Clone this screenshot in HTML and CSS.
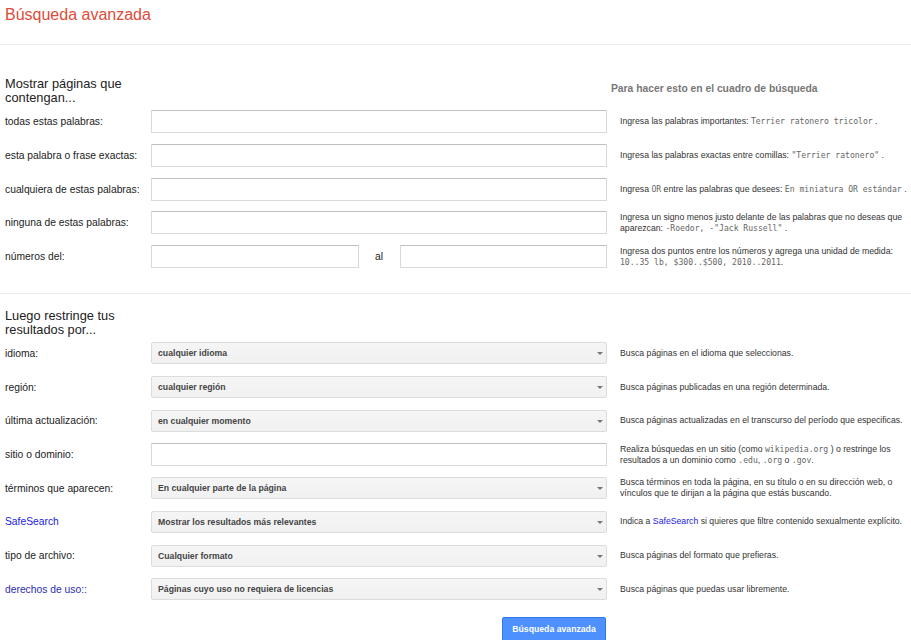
FILE: index.html
```html
<!DOCTYPE html>
<html lang="es">
<head>
<meta charset="utf-8">
<title>Búsqueda avanzada</title>
<link rel="stylesheet" href="styles.css">
</head>
<body>
<header class="top">
  <h1 class="title">Búsqueda avanzada</h1>
</header>
<main>
  <section class="sec sec-first">
    <div class="sec-head">
      <h2 class="sec-title">Mostrar páginas que contengan...</h2>
      <div class="help-head">Para hacer esto en el cuadro de búsqueda</div>
    </div>
    <div class="row">
      <label class="lbl">todas estas palabras:</label>
      <div class="field"><input class="txt" type="text"></div>
      <div class="help">Ingresa las palabras importantes: <span class="mono">Terrier ratonero tricolor</span> .</div>
    </div>
    <div class="row">
      <label class="lbl">esta palabra o frase exactas:</label>
      <div class="field"><input class="txt" type="text"></div>
      <div class="help">Ingresa las palabras exactas entre comillas: <span class="mono">"Terrier ratonero"</span> .</div>
    </div>
    <div class="row">
      <label class="lbl">cualquiera de estas palabras:</label>
      <div class="field"><input class="txt" type="text"></div>
      <div class="help">Ingresa <span class="mono">OR</span> entre las palabras que desees: <span class="mono">En miniatura OR estándar</span> .</div>
    </div>
    <div class="row">
      <label class="lbl">ninguna de estas palabras:</label>
      <div class="field"><input class="txt" type="text"></div>
      <div class="help">Ingresa un signo menos justo delante de las palabras que no deseas que aparezcan: <span class="mono">-Roedor, -"Jack Russell"</span> .</div>
    </div>
    <div class="row">
      <label class="lbl">números del:</label>
      <div class="field range">
        <input class="txt" type="text">
        <span class="al">al</span>
        <input class="txt" type="text">
      </div>
      <div class="help">Ingresa dos puntos entre los números y agrega una unidad de medida: <span class="mono">10..35 lb, $300..$500, 2010..2011</span>.</div>
    </div>
  </section>

  <section class="sec sec-second">
    <div class="sec-head">
      <h2 class="sec-title">Luego restringe tus resultados por...</h2>
    </div>
    <div class="row">
      <label class="lbl">idioma:</label>
      <div class="field"><div class="sel"><span>cualquier idioma</span></div></div>
      <div class="help">Busca páginas en el idioma que seleccionas.</div>
    </div>
    <div class="row">
      <label class="lbl">región:</label>
      <div class="field"><div class="sel"><span>cualquier región</span></div></div>
      <div class="help">Busca páginas publicadas en una región determinada.</div>
    </div>
    <div class="row">
      <label class="lbl">última actualización:</label>
      <div class="field"><div class="sel"><span>en cualquier momento</span></div></div>
      <div class="help">Busca páginas actualizadas en el transcurso del período que especificas.</div>
    </div>
    <div class="row">
      <label class="lbl">sitio o dominio:</label>
      <div class="field"><input class="txt" type="text"></div>
      <div class="help">Realiza búsquedas en un sitio (como <span class="mono">wikipedia.org</span> ) o restringe los resultados a un dominio como <span class="mono">.edu</span>, <span class="mono">.org</span> o <span class="mono">.gov</span>.</div>
    </div>
    <div class="row">
      <label class="lbl">términos que aparecen:</label>
      <div class="field"><div class="sel"><span>En cualquier parte de la página</span></div></div>
      <div class="help">Busca términos en toda la página, en su título o en su dirección web, o vínculos que te dirijan a la página que estás buscando.</div>
    </div>
    <div class="row">
      <a class="lbl link" href="#">SafeSearch</a>
      <div class="field"><div class="sel"><span>Mostrar los resultados más relevantes</span></div></div>
      <div class="help">Indica a <a class="link-in" href="#">SafeSearch</a> si quieres que filtre contenido sexualmente explícito.</div>
    </div>
    <div class="row">
      <label class="lbl">tipo de archivo:</label>
      <div class="field"><div class="sel"><span>Cualquier formato</span></div></div>
      <div class="help">Busca páginas del formato que prefieras.</div>
    </div>
    <div class="row">
      <a class="lbl link link-dark" href="#">derechos de uso::</a>
      <div class="field"><div class="sel"><span>Páginas cuyo uso no requiera de licencias</span></div></div>
      <div class="help">Busca páginas que puedas usar libremente.</div>
    </div>
    <div class="actions">
      <button class="btn" type="button">Búsqueda avanzada</button>
    </div>
  </section>
</main>
</body>
</html>
```

FILE: styles.css
```css
html {
  overflow: hidden;
}

body {
  margin: 0;
  background: #fff;
  color: #222;
  font-family: "Liberation Sans", Arial, sans-serif;
}

.top {
  padding: 5px 5px 19px;
  border-bottom: 1px solid #ebebeb;
}

.title {
  margin: 0;
  font-size: 16px;
  line-height: 20px;
  font-weight: normal;
  color: #dd4b39;
}

.sec {
  padding-left: 5px;
}

.sec-first {
  padding-top: 32px;
  padding-bottom: 19.5px;
}

.sec-second {
  border-top: 1px solid #ebebeb;
  padding-top: 14.7px;
}

.sec-head,
.row,
.actions {
  display: grid;
  grid-template-columns: 146px 456px 1fr;
}

.sec-title {
  margin: 0;
  font-size: 12.8px;
  line-height: 14px;
  font-weight: normal;
  color: #222;
}

.help-head {
  grid-column: 3;
  margin-top: 4.5px;
  padding-left: 4px;
  font-size: 10.3px;
  line-height: 13px;
  font-weight: bold;
  color: #777;
  white-space: nowrap;
}

.row {
  height: 33.7px;
  align-items: center;
}

.lbl {
  font-size: 10.3px;
  line-height: 13px;
  color: #222;
}

.link {
  color: #1a1ae6;
  text-decoration: none;
}

.link-dark {
  color: #2b2bb0;
}

.field {
  display: flex;
  align-items: center;
}

.txt {
  box-sizing: border-box;
  width: 100%;
  height: 23px;
  margin: 0;
  padding: 0 6px;
  border: 1px solid #d9d9d9;
  border-top-color: #c0c0c0;
  border-radius: 1px;
  background: #fff;
  font-family: inherit;
  font-size: 10.3px;
}

.range .txt {
  flex: 1;
  min-width: 0;
}

.al {
  width: 41px;
  flex: none;
  text-align: center;
  font-size: 10.3px;
  color: #222;
}

.sel {
  position: relative;
  box-sizing: border-box;
  width: 100%;
  height: 22px;
  display: flex;
  align-items: center;
  padding-left: 6px;
  border: 1px solid #dcdcdc;
  border-radius: 2px;
  background: linear-gradient(#f5f5f5, #f1f1f1);
  font-size: 8.7px;
  font-weight: bold;
  color: #444;
}

.sel::after {
  content: "";
  position: absolute;
  right: 3px;
  top: 9px;
  border-left: 3px solid transparent;
  border-right: 3px solid transparent;
  border-top: 3.5px solid #777;
}

.help {
  padding-left: 13px;
  font-size: 8.7px;
  line-height: 11px;
  color: #333;
}

.mono {
  font-family: "DejaVu Sans Mono", "Liberation Mono", monospace;
  font-size: 8.1px;
  line-height: 1;
  color: #666;
}

.link-in {
  color: #1a1ae6;
  text-decoration: none;
}

.actions {
  margin-top: 10.7px;
}

.btn {
  grid-column: 2;
  justify-self: end;
  margin-right: 1px;
  width: 104px;
  height: 25px;
  padding: 0;
  border: 1px solid #3079ed;
  border-radius: 2px;
  background: #4d90fe;
  color: #fff;
  font-family: inherit;
  font-size: 8.7px;
  font-weight: bold;
}
```
